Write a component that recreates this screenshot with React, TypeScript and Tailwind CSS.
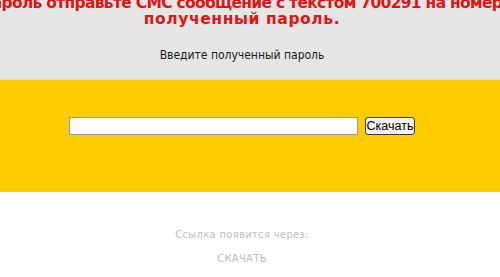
export default function App() {
  return (
    <div className="w-[500px] h-[277px] overflow-hidden bg-white">
      {/* top: instructions */}
      <div className="h-[79px] bg-[#e6e6e6] overflow-hidden pr-4">
        <div className="-mt-[5px] flex flex-col items-center text-[#e01414] font-bold text-[15.5px] leading-[16px] font-['DejaVu_Sans',sans-serif]">
          <div className="whitespace-nowrap tracking-[-0.7px]">пароль отправьте СМС сообщение с текстом 700291 на номер</div>
          <div className="whitespace-nowrap tracking-[0.6px]">полученный пароль.</div>
        </div>
        <p className="mt-[19px] text-center text-[12px] text-[#1a1a1a] font-['DejaVu_Sans_Condensed','DejaVu_Sans',sans-serif]">
          Введите полученный пароль
        </p>
      </div>

      {/* yellow form band */}
      <div className="h-[113px] bg-[#ffcc00] border-t border-[#dcdce6] pr-4 pt-[37px]">
        <form className="flex justify-center items-center gap-[7px]" onSubmit={(e) => e.preventDefault()}>
          <input
            type="text"
            className="w-[289px] h-[18px] bg-white border border-[#8d9bab] outline-none"
          />
          <button
            type="submit"
            className="h-[18px] px-[1px] bg-[#f4f4f4] border border-[#3a3a3a] rounded-[3px] text-[12.5px] leading-[14px] text-black font-['Liberation_Sans',Arial,sans-serif]"
          >
            Скачать
          </button>
        </form>
      </div>

      {/* link area */}
      <div className="pr-4 pt-[35px] flex flex-col items-center text-[#bdbdbd] text-[10px] tracking-[0.3px] font-['DejaVu_Sans',sans-serif]">
        <span>Ссылка появится через:</span>
        <span className="mt-[9px]">СКАЧАТЬ</span>
      </div>
    </div>
  );
}
